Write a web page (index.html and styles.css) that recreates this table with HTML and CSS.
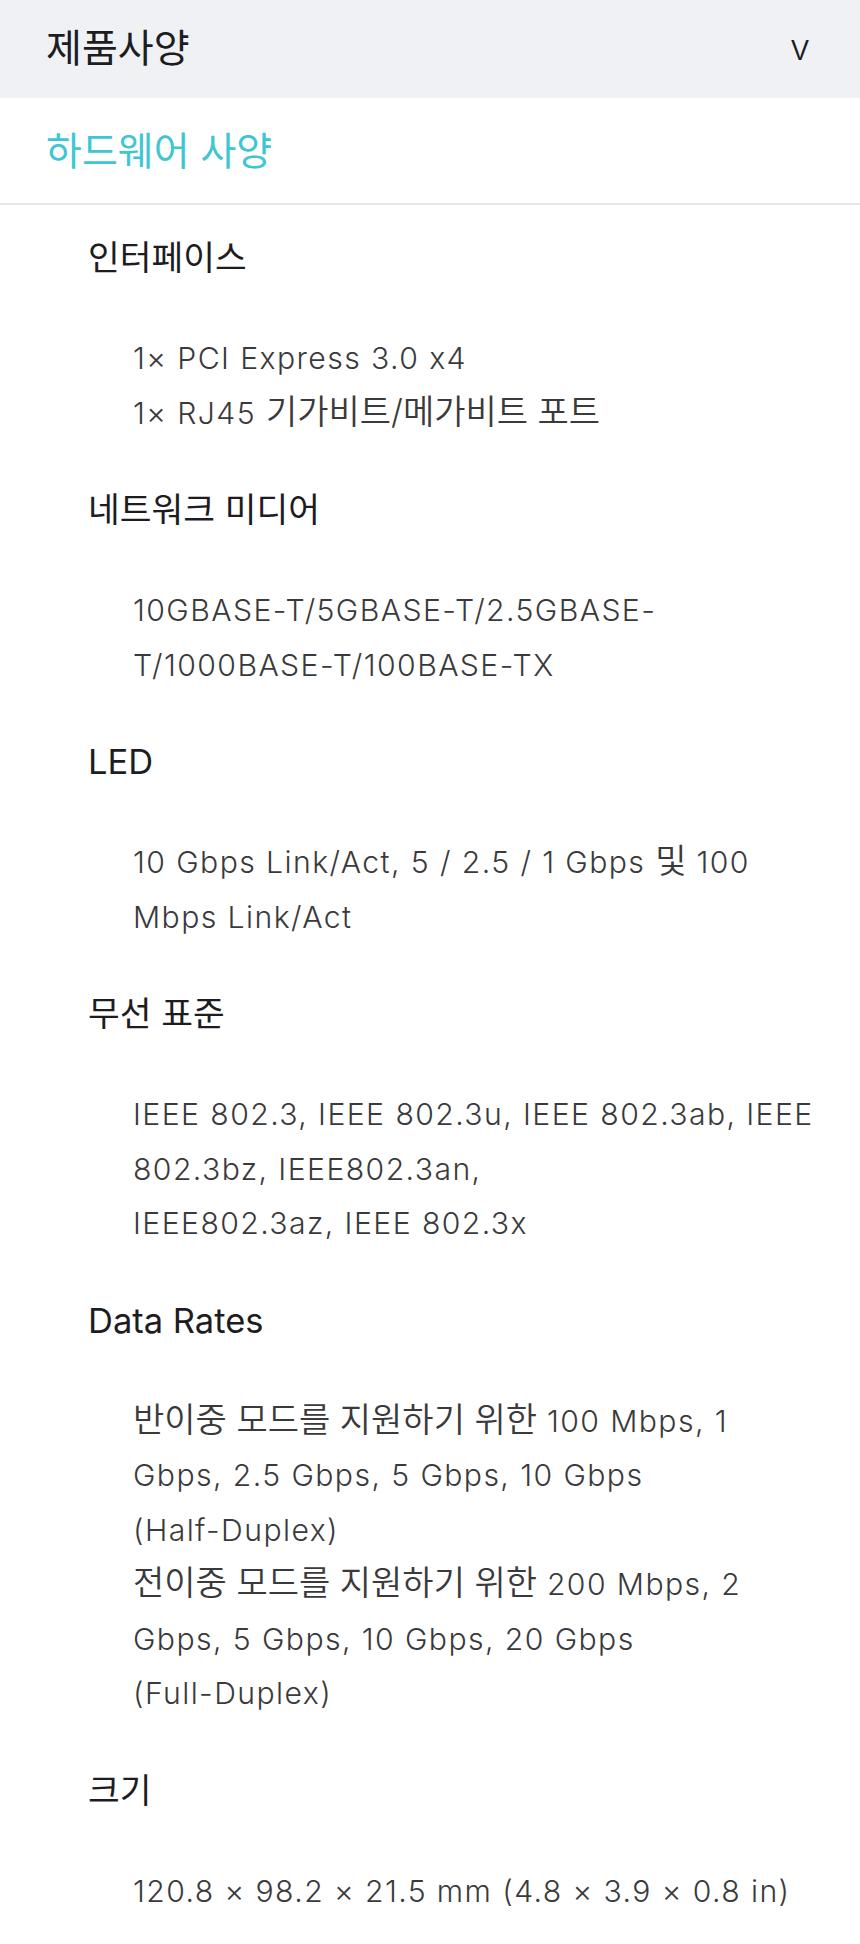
FILE: index.html
```html
<!DOCTYPE html>
<html lang="ko">
<head>
<meta charset="utf-8">
<title>제품사양</title>
<link rel="stylesheet" href="styles.css">
</head>
<body>
<section class="accordion">
  <div class="acc-head">
    <h2 class="acc-title">제품사양</h2>
    <span class="chev">v</span>
  </div>
  <div class="tab">하드웨어 사양</div>
  <dl class="specs">
    <div class="spec">
      <dt>인터페이스</dt>
      <dd>1× PCI Express 3.0 x4<br>1× RJ45 <span class="ko">기가비트/메가비트 포트</span></dd>
    </div>
    <div class="spec">
      <dt>네트워크 미디어</dt>
      <dd>10GBASE-T/5GBASE-T/2.5GBASE-T/1000BASE-T/100BASE-TX</dd>
    </div>
    <div class="spec">
      <dt>LED</dt>
      <dd>10 Gbps Link/Act, 5 / 2.5 / 1 Gbps <span class="ko">및</span> 100 Mbps Link/Act</dd>
    </div>
    <div class="spec">
      <dt>무선 표준</dt>
      <dd>IEEE 802.3, IEEE 802.3u, IEEE 802.3ab, IEEE 802.3bz, IEEE802.3an,<br>IEEE802.3az, IEEE 802.3x</dd>
    </div>
    <div class="spec">
      <dt>Data Rates</dt>
      <dd><span class="ko">반이중 모드를 지원하기 위한</span> 100 Mbps, 1 Gbps, 2.5 Gbps, 5 Gbps, 10 Gbps <span class="nobr">(Half-Duplex)</span><br><span class="ko">전이중 모드를 지원하기 위한</span> 200 Mbps, 2 Gbps, 5 Gbps, 10 Gbps, 20 Gbps <span class="nobr">(Full-Duplex)</span></dd>
    </div>
    <div class="spec">
      <dt>크기</dt>
      <dd>120.8 × 98.2 × 21.5 mm (4.8 × 3.9 × 0.8 in)</dd>
    </div>
  </dl>
</section>
</body>
</html>
```

FILE: styles.css
```css
html, body {
  margin: 0;
  padding: 0;
  background: #ffffff;
}

body {
  font-family: Inter, "Noto Sans CJK KR", sans-serif;
  color: #1d1d1f;
}

.acc-head {
  display: flex;
  align-items: center;
  justify-content: space-between;
  height: 98px;
  box-sizing: border-box;
  padding: 0 50px 4px 46px;
  background: #f0f1f5;
}

.acc-title {
  margin: 0;
  font-size: 39px;
  font-weight: 400;
  line-height: 1;
  color: #1d1d1f;
}

.chev {
  font-size: 36px;
  font-weight: 300;
  line-height: 1;
  color: #1d1d1f;
}

.tab {
  display: flex;
  align-items: center;
  height: 107px;
  box-sizing: border-box;
  padding: 0 46px 6px;
  font-size: 39px;
  color: #3fc6d3;
  border-bottom: 2px solid #e6e6ea;
}

.specs {
  margin: 0;
  padding: 29px 40px 0 88px;
}

.spec dt {
  font-size: 34.5px;
  line-height: 48px;
  font-weight: 400;
  color: #1d1d1f;
}

.spec dd {
  margin: 49px 0 46px 45px;
  font-size: 30.2px;
  line-height: 54.5px;
  font-weight: 300;
  letter-spacing: 1.4px;
  color: #3a3a3c;
}

.ko {
  font-size: 34px;
  line-height: 1;
  letter-spacing: 0;
  font-weight: 350;
}

.nobr {
  white-space: nowrap;
}
```
